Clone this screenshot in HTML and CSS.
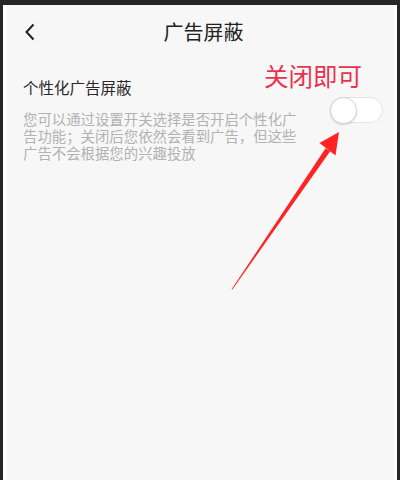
FILE: index.html
```html
<!DOCTYPE html>
<html lang="zh-CN">
<head>
<meta charset="utf-8">
<link rel="stylesheet" href="styles.css">
</head>
<body>
<div class="frame">
  <div class="screen">
    <header class="header">
      <svg class="back" width="12" height="18" viewBox="0 0 12 18"><polyline points="9.5,1.5 2.5,9 9.5,16.5" fill="none" stroke="#222" stroke-width="2"/></svg>
      <h1 class="title">广告屏蔽</h1>
    </header>
    <section class="row">
      <div class="text">
        <div class="label">个性化广告屏蔽</div>
        <p class="desc">您可以通过设置开关选择是否开启个性化广告功能；关闭后您依然会看到广告，但这些广告不会根据您的兴趣投放</p>
      </div>
      <div class="toggle"><span class="knob"></span></div>
    </section>
    <div class="note">关闭即可</div>
    <svg class="arrow" width="400" height="480" viewBox="0 0 400 480">
      <polygon points="231.6,289.2 232.4,289.6 330.2,151.2 325.6,148.2" fill="#ff2323"/>
      <polygon points="339,132 319.5,143 335.5,155.5" fill="#ff2323"/>
    </svg>
  </div>
</div>
</body>
</html>
```
FILE: styles.css
```css
html, body {
  margin: 0;
  padding: 0;
  background: #222;
}
.frame {
  width: 400px;
  height: 480px;
  box-sizing: border-box;
  padding: 5px 3px 0 3px;
  background: #262626;
}
.screen {
  height: 475px;
  box-sizing: border-box;
  border-left: 4px solid #fff;
  border-right: 3px solid #fff;
  background: #f7f7f7;
  font-family: "Noto Sans CJK SC", "Noto Sans", sans-serif;
}
.header {
  height: 54px;
  display: flex;
  align-items: center;
  justify-content: center;
  position: relative;
}
.back {
  position: absolute;
  left: 17px;
  top: 18px;
}
.title {
  margin: 0 0 0 6px;
  font-size: 20px;
  font-weight: 400;
  color: #222;
  line-height: 24px;
}
.row {
  display: flex;
  justify-content: space-between;
  padding: 18px 11px 0 16px;
}
.label {
  font-size: 15.5px;
  line-height: 20px;
  color: #2a2a2a;
}
.desc {
  margin: 13px 0 0 0;
  width: 278px;
  font-size: 14.4px;
  line-height: 17px;
  color: #b2b2b2;
}
.toggle {
  margin-top: 20px;
  width: 53px;
  height: 26px;
  box-sizing: border-box;
  border-radius: 13px;
  border: 1px solid #e3e3e3;
  background: #fff;
  position: relative;
}
.knob {
  position: absolute;
  left: -1px;
  top: -1px;
  width: 27px;
  height: 27px;
  box-sizing: border-box;
  border-radius: 50%;
  background: #fff;
  border: 1px solid #d6d6d6;
  box-shadow: 0 1px 2px rgba(0,0,0,0.15);
}
.note {
  position: absolute;
  left: 264px;
  top: 62px;
  font-size: 24.5px;
  line-height: 28px;
  color: #e8334f;
  font-family: "Noto Sans CJK SC", sans-serif;
  font-weight: 400;
}
.arrow {
  position: absolute;
  left: 0;
  top: 0;
  pointer-events: none;
}
```
